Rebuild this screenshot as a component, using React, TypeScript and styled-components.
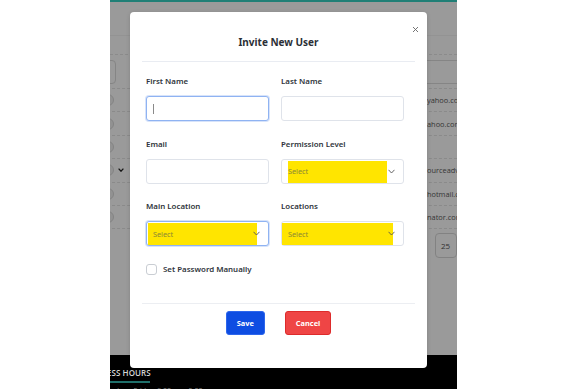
import React from "react";
import styled, { createGlobalStyle } from "styled-components";

const GlobalStyle = createGlobalStyle`
  html, body { margin: 0; padding: 0; background: #fff; }
  body { font-family: "Noto Sans", "Open Sans", Arial, sans-serif; }
  * { box-sizing: border-box; }
`;

const Page = styled.div`
  width: 568px;
  height: 389px;
  background: #fff;
  padding-left: 110px;
  overflow: hidden;
`;

const AppFrame = styled.div`
  position: relative;
  width: 347px;
  height: 389px;
  overflow: hidden;
  display: flex;
  flex-direction: column;
  background: #fff;
`;

const MainArea = styled.div`
  position: relative;
  height: 355px;
  flex: none;
  display: flex;
  flex-direction: column;
  background: #fff;
  font-family: "Open Sans", sans-serif;
`;

const TopLine = styled.div`
  height: 2px;
  flex: none;
  background: #36d2c4;
`;

const HeaderBand = styled.div`
  height: 34px;
  flex: none;
  border-bottom: 1px solid #f3f3f3;
`;

const FilterBar = styled.div`
  margin-top: 18px;
  height: 34px;
  flex: none;
  border-top: 1px dashed #e6e6e6;
  display: flex;
  align-items: center;
  justify-content: space-between;
`;

const FilterBox = styled.div<{ $w: number; $ml: number; $mr: number }>`
  width: ${(p) => p.$w}px;
  height: 24px;
  margin-left: ${(p) => p.$ml}px;
  margin-right: ${(p) => p.$mr}px;
  border: 1px solid #dcdcdc;
  border-radius: 4px;
  background: #fff;
`;

const Table = styled.div`
  display: flex;
  flex-direction: column;
  margin-left: -8px;
  border-top: 1px dashed #e4e4e4;
`;

const Row = styled.div`
  height: 23.4px;
  display: grid;
  grid-template-columns: 12px 14px 1fr 30px;
  align-items: center;
  border-bottom: 1px dashed #e4e4e4;
  font-size: 7.4px;
  color: #5a5a5a;
  white-space: nowrap;
`;

const Avatar = styled.span`
  width: 12px;
  height: 12px;
  border-radius: 50%;
  border: 1px solid #dadada;
  background: #f2f2f2;
`;

const RowChevron = styled.span`
  display: flex;
  justify-content: center;
  color: #222;
`;

const EmailUser = styled.span`
  text-align: right;
  overflow: hidden;
`;

const EmailDomain = styled.span`
  overflow: visible;
`;

const Pagination = styled.div`
  margin-top: 4px;
  padding-left: 325px;
  display: flex;
`;

const PageSize = styled.div`
  width: 40px;
  height: 25px;
  border: 1px solid #d8d8d8;
  border-radius: 4px;
  display: flex;
  align-items: center;
  padding-left: 5px;
  font-size: 8px;
  color: #555;
`;

const Backdrop = styled.div`
  position: absolute;
  inset: 0;
  background: rgba(0, 0, 0, 0.395);
`;

const Footer = styled.div`
  flex: 1;
  background: #000;
  padding-top: 12px;
  font-family: "Open Sans", sans-serif;
  white-space: nowrap;
`;

const FooterTitle = styled.div`
  margin-left: -28px;
  font-size: 8px;
  line-height: 11px;
  font-weight: 600;
  color: #d6d6d6;
  letter-spacing: 0.1px;
`;

const FooterRule = styled.div`
  margin-top: 3px;
  width: 40px;
  height: 2px;
  background: #1f6f6a;
`;

const FooterText = styled.div`
  margin-top: 3px;
  font-size: 7px;
  color: #8a8a8a;
  margin-left: -10px;
`;

/* ---------- Modal ---------- */

const Modal = styled.div`
  position: absolute;
  left: 20px;
  top: 12px;
  width: 297px;
  height: 356px;
  background: #fff;
  border-radius: 4px;
  box-shadow: 0 1px 4px rgba(0, 0, 0, 0.15);
  display: flex;
  flex-direction: column;
  font-family: "Noto Sans", "Open Sans", sans-serif;
`;

const CloseButton = styled.button`
  position: absolute;
  top: 14px;
  right: 8px;
  width: 7px;
  height: 7px;
  padding: 0;
  border: none;
  background: transparent;
  display: flex;
  align-items: center;
  justify-content: center;
`;

const ModalHeader = styled.div`
  margin: 0 12px;
  padding: 23px 0 12px;
  border-bottom: 1px solid #e9ecf2;
  text-align: center;
`;

const Title = styled.h2`
  margin: 0;
  font-size: 10px;
  line-height: 14px;
  font-weight: 700;
  color: #2b2f36;
`;

const ModalBody = styled.div`
  flex: 1;
  padding: 13px 23px 0 16px;
`;

const FormGrid = styled.div`
  display: grid;
  grid-template-columns: 123px 123px;
  column-gap: 12px;
  row-gap: 16.5px;
`;

const Field = styled.div`
  display: flex;
  flex-direction: column;
`;

const Label = styled.label`
  font-size: 7.9px;
  line-height: 12px;
  font-weight: 600;
  color: #30353c;
  margin-bottom: 9px;
`;

const InputBox = styled.div<{ $focused?: boolean }>`
  height: 25px;
  border-radius: 3px;
  border: 1px solid ${(p) => (p.$focused ? "#8fb3f2" : "#dfe3ea")};
  box-shadow: ${(p) => (p.$focused ? "0 0 0 1px rgba(140, 175, 240, 0.35)" : "none")};
  background: #fff;
  display: flex;
  align-items: center;
  padding-left: 6px;
`;

const Caret = styled.span`
  width: 1px;
  height: 10px;
  background: #8a8a8a;
`;

const SelectBox = styled.div<{ $focused?: boolean }>`
  position: relative;
  height: 25px;
  border-radius: 3px;
  border: 1px solid ${(p) => (p.$focused ? "#8fb3f2" : "#dfe3ea")};
  box-shadow: ${(p) => (p.$focused ? "0 0 0 1px rgba(140, 175, 240, 0.35)" : "none")};
  background: #fff;
  display: flex;
  align-items: center;
  padding: 0 8px 0 6px;
`;

const Highlight = styled.span<{ $left: number; $right: number }>`
  position: absolute;
  top: 1px;
  bottom: 0px;
  left: ${(p) => p.$left}px;
  right: ${(p) => p.$right}px;
  background: #ffe500;
`;

const SelectValue = styled.span`
  position: relative;
  flex: 1;
  font-size: 7.3px;
  color: #8a8736;
`;

const Chevron = styled.span`
  position: relative;
  display: flex;
`;

const CheckRow = styled.div`
  margin-top: 18px;
  display: flex;
  align-items: center;
  gap: 6px;
`;

const CheckBox = styled.span`
  width: 11px;
  height: 11px;
  border: 1px solid #c9cdd3;
  border-radius: 3px;
  background: #fff;
`;

const CheckLabel = styled.span`
  font-size: 7.9px;
  line-height: 11px;
  font-weight: 600;
  color: #30353c;
`;

const ModalFooter = styled.div`
  margin: 0 12px;
  border-top: 1px solid #eceef2;
  padding: 7px 0 33px;
  display: flex;
  justify-content: center;
  gap: 20px;
`;

const Button = styled.button<{ $variant: "primary" | "danger" }>`
  height: 24px;
  padding: 0 10px;
  border-radius: 3px;
  border: 1px solid ${(p) => (p.$variant === "primary" ? "#2d66ec" : "#dd2b2b")};
  background: ${(p) => (p.$variant === "primary" ? "#0e4de2" : "#ef4545")};
  color: #fff;
  font-family: "Noto Sans", sans-serif;
  font-size: 7.4px;
  font-weight: 700;
`;

const ChevronIcon = () => (
  <svg width="7" height="5" viewBox="0 0 7 5">
    <path d="M0.5 0.8 L3.5 4 L6.5 0.8" fill="none" stroke="#555" strokeWidth="0.9" />
  </svg>
);

const Select = ({
  focused,
  hl,
}: {
  focused?: boolean;
  hl: [number, number];
}) => (
  <SelectBox $focused={focused}>
    <Highlight $left={hl[0]} $right={hl[1]} />
    <SelectValue>Select</SelectValue>
    <Chevron>
      <ChevronIcon />
    </Chevron>
  </SelectBox>
);

const rows: { user: string; domain: string; chevron?: boolean }[] = [
  { user: "mark.benson@", domain: "yahoo.com" },
  { user: "jenny.l@y", domain: "ahoo.com" },
  { user: "", domain: "" },
  { user: "info@res", domain: "ourceadvisor.com", chevron: true },
  { user: "tom.r@", domain: "hotmail.com" },
  { user: "admin@illumi", domain: "nator.com" },
];

export default function App() {
  return (
    <>
      <GlobalStyle />
      <Page>
        <AppFrame>
          <MainArea>
            <TopLine />
            <HeaderBand />
            <FilterBar>
              <FilterBox $w={46} $ml={-40} $mr={0} />
              <FilterBox $w={80} $ml={0} $mr={-40} />
            </FilterBar>
            <Table>
              {rows.map((r, i) => (
                <Row key={i}>
                  <Avatar />
                  <RowChevron>
                    {r.chevron && (
                      <svg width="6" height="4" viewBox="0 0 6 4">
                        <path d="M0.6 0.6 L3 3.2 L5.4 0.6" fill="none" stroke="#222" strokeWidth="1.3" />
                      </svg>
                    )}
                  </RowChevron>
                  <EmailUser>{r.user}</EmailUser>
                  <EmailDomain>{r.domain}</EmailDomain>
                </Row>
              ))}
            </Table>
            <Pagination>
              <PageSize>25</PageSize>
            </Pagination>
            <Backdrop />
          </MainArea>
          <Footer>
            <FooterTitle>BUSINESS HOURS</FooterTitle>
            <FooterRule />
            <FooterText>Monday – Friday: 9:00am – 5:00pm</FooterText>
          </Footer>

          <Modal>
            <CloseButton aria-label="Close">
              <svg width="7" height="7" viewBox="0 0 7 7">
                <path d="M1 1 L6 6 M6 1 L1 6" stroke="#666" strokeWidth="0.9" />
              </svg>
            </CloseButton>
            <ModalHeader>
              <Title>Invite New User</Title>
            </ModalHeader>
            <ModalBody>
              <FormGrid>
                <Field>
                  <Label>First Name</Label>
                  <InputBox $focused>
                    <Caret />
                  </InputBox>
                </Field>
                <Field>
                  <Label>Last Name</Label>
                  <InputBox />
                </Field>
                <Field>
                  <Label>Email</Label>
                  <InputBox />
                </Field>
                <Field>
                  <Label>Permission Level</Label>
                  <Select hl={[6, 16]} />
                </Field>
                <Field>
                  <Label>Main Location</Label>
                  <Select focused hl={[1, 11]} />
                </Field>
                <Field>
                  <Label>Locations</Label>
                  <Select hl={[0, 10]} />
                </Field>
              </FormGrid>
              <CheckRow>
                <CheckBox />
                <CheckLabel>Set Password Manually</CheckLabel>
              </CheckRow>
            </ModalBody>
            <ModalFooter>
              <Button $variant="primary">Save</Button>
              <Button $variant="danger">Cancel</Button>
            </ModalFooter>
          </Modal>
        </AppFrame>
      </Page>
    </>
  );
}
